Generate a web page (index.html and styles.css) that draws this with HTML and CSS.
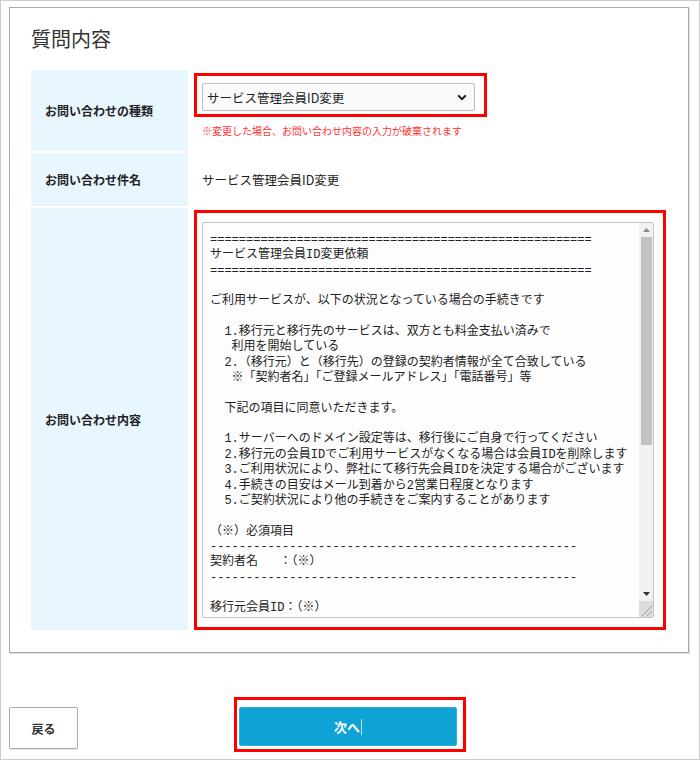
FILE: index.html
```html
<!DOCTYPE html>
<html lang="ja">

<head>
    <meta charset="UTF-8">
    <meta name="viewport" content="width=device-width, initial-scale=1.0">
    <title>質問内容</title>
    <link rel="stylesheet" href="styles.css">
</head>

<body>
    <div class="panel">
        <h2 class="title">質問内容</h2>
        <div class="form-table">
            <div class="label">お問い合わせの種類</div>
            <div class="cell cell-select">
                <div class="mark mark-select">
                    <div class="select-wrap">
                        <select class="select">
                            <option>サービス管理会員ID変更</option>
                        </select>
                        <svg class="chevron" width="10" height="7" viewBox="0 0 10 7">
                            <path d="M1.2 1.4 5 5.2 8.8 1.4" fill="none" stroke="#111" stroke-width="2" />
                        </svg>
                    </div>
                </div>
                <p class="note">※変更した場合、お問い合わせ内容の入力が破棄されます</p>
            </div>

            <div class="label">お問い合わせ件名</div>
            <div class="cell cell-text">サービス管理会員ID変更</div>

            <div class="label">お問い合わせ内容</div>
            <div class="cell cell-area">
                <div class="mark mark-area">
                    <div class="area-wrap">
                        <textarea class="body-text">=====================================================
サービス管理会員ID変更依頼
=====================================================

ご利用サービスが、以下の状況となっている場合の手続きです

  1.移行元と移行先のサービスは、双方とも料金支払い済みで
   利用を開始している
  2.（移行元）と（移行先）の登録の契約者情報が全て合致している
   ※「契約者名」「ご登録メールアドレス」「電話番号」等

  下記の項目に同意いただきます。

  1.サーバーへのドメイン設定等は、移行後にご自身で行ってください
  2.移行元の会員IDでご利用サービスがなくなる場合は会員IDを削除します
  3.ご利用状況により、弊社にて移行先会員IDを決定する場合がございます
  4.手続きの目安はメール到着から2営業日程度となります
  5.ご契約状況により他の手続きをご案内することがあります

（※）必須項目
---------------------------------------------------
契約者名   ：（※）
---------------------------------------------------

移行元会員ID：（※）
---------------------------------------------------

移行先会員ID：（※）
---------------------------------------------------

電話番号   ：（※）
---------------------------------------------------

メールアドレス：（※）
---------------------------------------------------

備考     ：
---------------------------------------------------

=====================================================</textarea>
                        <!-- 擬似スクロールバー -->
                        <div class="vscroll">
                            <div class="sb-btn">
                                <svg width="7" height="4" viewBox="0 0 7 4"><path d="M0 4h7L3.5 0z" fill="#8a8a8a" /></svg>
                            </div>
                            <div class="sb-track"><div class="sb-thumb"></div></div>
                            <div class="sb-btn">
                                <svg width="7" height="4" viewBox="0 0 7 4"><path d="M0 0h7L3.5 4z" fill="#333" /></svg>
                            </div>
                            <div class="sb-corner">
                                <svg width="14" height="16" viewBox="0 0 14 16">
                                    <path d="M3 15 13 5M8 15 13 10" stroke="#9a9a9a" stroke-width="1" fill="none" />
                                </svg>
                            </div>
                        </div>
                    </div>
                </div>
            </div>
        </div>
    </div>

    <div class="footer">
        <button class="btn-back" type="button">戻る</button>
        <div class="mark mark-next">
            <button class="btn-next" type="button">次へ<span class="caret"></span></button>
        </div>
    </div>
</body>

</html>
```

FILE: styles.css
```css
* {
    margin: 0;
    padding: 0;
    box-sizing: border-box;
}

html,
body {
    height: 760px;
}

body {
    font-family: "Noto Sans CJK JP", "Noto Sans", sans-serif;
    color: #333;
    background: #fff;
    border: 1px solid #ccc;
    overflow: hidden;
}

.panel {
    margin: 6px 0 0 8px;
    width: 680px;
    height: 646px;
    border: 1px solid #a9a9a9;
    box-shadow: 1px 1px 1px rgba(0, 0, 0, 0.12);
    padding: 0 20px;
}

.title {
    font-size: 20px;
    font-weight: normal;
    line-height: 24px;
    margin: 19px 0 19px 1px;
    color: #333;
}

.form-table {
    display: grid;
    grid-template-columns: 157px 1fr;
    row-gap: 2px;
    margin-left: 1px;
}

.label {
    background: #e8f6fd;
    font-size: 12px;
    font-weight: bold;
    color: #222;
    padding-left: 14px;
    display: flex;
    align-items: center;
}

.cell {
    padding-left: 6px;
}

.mark {
    border: 3px solid #f00;
}

.cell-select {
    height: 81px;
    padding-top: 3px;
}

.mark-select {
    width: 293px;
    padding: 7px 9px 3px 5px;
}

.select-wrap {
    position: relative;
}

.select {
    appearance: none;
    -webkit-appearance: none;
    display: block;
    width: 273px;
    height: 28px;
    border: 1px solid #bdbdbd;
    border-radius: 2px;
    background: #fafafa;
    font-family: inherit;
    font-size: 12.5px;
    color: #222;
    padding: 0 4px;
}

.chevron {
    position: absolute;
    right: 8px;
    top: 11px;
}

.note {
    color: #f33;
    font-size: 10px;
    line-height: 16px;
    margin-top: 6px;
    padding-left: 8px;
}

.cell-text {
    height: 53px;
    display: flex;
    align-items: center;
    padding-left: 14px;
    font-size: 12.5px;
    color: #222;
}

.cell-area {
    height: 422px;
    padding-top: 2px;
}

.mark-area {
    width: 472px;
    height: 420px;
    padding: 9px 9px 9px 5px;
}

.area-wrap {
    position: relative;
    width: 452px;
    height: 396px;
}

.body-text {
    display: block;
    width: 100%;
    height: 100%;
    border: 1px solid #c4c4c4;
    border-radius: 2px;
    background: #fdfdfd;
    font-family: "Liberation Mono", "Noto Sans CJK JP", monospace;
    font-size: 12px;
    line-height: 15.35px;
    color: #222;
    padding: 10px 22px 7px 7px;
    white-space: pre;
    overflow: hidden;
    resize: none;
}

.vscroll {
    position: absolute;
    top: 1px;
    right: 1px;
    bottom: 1px;
    width: 14px;
    display: flex;
    flex-direction: column;
    background: #f1f1f1;
}

.sb-btn {
    height: 14px;
    display: flex;
    align-items: center;
    justify-content: center;
}

.sb-track {
    flex: 1;
    padding: 0 1px 0 2px;
}

.sb-thumb {
    height: 208px;
    background: #c1c1c1;
}

.sb-corner {
    height: 16px;
    background: #dcdcdc;
}

.sb-corner svg {
    display: block;
}

.footer {
    display: grid;
    grid-template-columns: 1fr auto 1fr;
    align-items: start;
    margin-top: 44px;
}

.btn-back {
    justify-self: start;
    margin: 10px 0 0 8px;
    width: 69px;
    height: 42px;
    background: #fff;
    border: 1px solid #aaa;
    border-radius: 2px;
    box-shadow: 0 1px 1px rgba(0, 0, 0, 0.1);
    font-family: inherit;
    font-size: 12px;
    font-weight: bold;
    color: #333;
    cursor: pointer;
}

.mark-next {
    padding: 7px 6px 3px 2px;
}

.btn-next {
    display: flex;
    align-items: center;
    justify-content: center;
    width: 218px;
    height: 39px;
    background: #0ea2d5;
    border: 1px solid #2fb0dc;
    border-radius: 2px;
    font-family: inherit;
    font-size: 13px;
    font-weight: bold;
    color: #fff;
    cursor: pointer;
}

.caret {
    display: inline-block;
    width: 1px;
    height: 16px;
    margin-left: 1px;
    background: #bfe6f4;
}
```
